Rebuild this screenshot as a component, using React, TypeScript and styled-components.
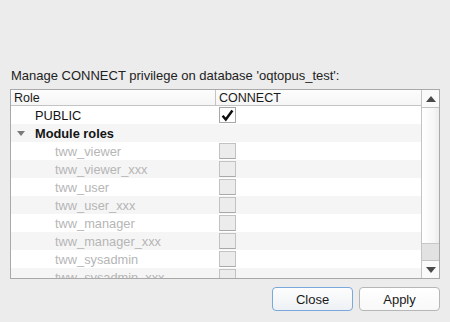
import React from 'react';
import styled, { createGlobalStyle } from 'styled-components';

const GlobalStyle = createGlobalStyle`
    html, body {
        margin: 0;
        padding: 0;
        background: #ececec;
    }
    body {
        font-family: "Liberation Sans", Arial, sans-serif;
        font-size: 13px;
        color: #1a1a1a;
    }
`;

const Dialog = styled.div`
    width: 450px;
    height: 322px;
    box-sizing: border-box;
    padding: 67px 10px 0 10px;
    display: flex;
    flex-direction: column;
`;

const Caption = styled.div`
    height: 22px;
    line-height: 17px;
    padding-left: 1px;
    font-size: 13px;
    color: #222;
`;

const Frame = styled.div`
    height: 190px;
    box-sizing: border-box;
    border: 1px solid #a9a9a9;
    display: grid;
    grid-template-columns: 1fr 18px;
    background: #fff;
    overflow: hidden;
`;

const Body = styled.div`
    display: flex;
    flex-direction: column;
    overflow: hidden;
`;

const Header = styled.div`
    display: grid;
    grid-template-columns: 205px 1fr;
    height: 15px;
    flex: none;
    border-bottom: 1px solid #c4c4c4;
    background: linear-gradient(#fdfdfd, #f5f5f5);
`;

const HeaderCell = styled.div<{ $divider?: boolean }>`
    padding-left: 3px;
    line-height: 16px;
    font-size: 12.5px;
    color: #1a1a1a;
    border-right: ${p => (p.$divider ? '1px solid #c4c4c4' : 'none')};
`;

const Row = styled.div<{ $striped?: boolean }>`
    display: grid;
    grid-template-columns: 206px 1fr;
    height: 18px;
    flex: none;
    align-items: center;
    background: ${p => (p.$striped ? '#f5f5f5' : '#ffffff')};
`;

const Name = styled.div<{ $indent: number; $muted?: boolean; $bold?: boolean }>`
    display: flex;
    align-items: center;
    padding-left: ${p => p.$indent}px;
    font-size: 12.8px;
    font-weight: ${p => (p.$bold ? 700 : 400)};
    color: ${p => (p.$muted ? '#b6b6b6' : '#141414')};
    white-space: nowrap;
`;

const Arrow = styled.span`
    width: 0;
    height: 0;
    border-left: 4px solid transparent;
    border-right: 4px solid transparent;
    border-top: 5px solid #7a7a7a;
    margin: 0 10px 0 -18px;
`;

const Check = styled.div<{ $disabled?: boolean }>`
    width: 17px;
    height: 16px;
    margin-left: 2px;
    box-sizing: border-box;
    border: 1px solid ${p => (p.$disabled ? '#c2c2c2' : '#a8a8a8')};
    border-bottom-color: ${p => (p.$disabled ? '#a9a9a9' : '#a8a8a8')};
    background: ${p => (p.$disabled ? '#ececec' : '#ffffff')};
    display: flex;
    align-items: center;
    justify-content: center;
`;

const ScrollBar = styled.div`
    border-left: 1px solid #c4c4c4;
    display: flex;
    flex-direction: column;
    background: linear-gradient(to right, #ffffff, #f6f6f6 70%, #ececec);
`;

const ScrollBtn = styled.div<{ $top?: boolean }>`
    height: 17px;
    flex: none;
    display: flex;
    align-items: center;
    justify-content: center;
    border-bottom: ${p => (p.$top ? '1px solid #c4c4c4' : 'none')};
    border-top: ${p => (p.$top ? 'none' : '1px solid #c4c4c4')};
    background: #fafafa;
`;

const Tri = styled.span<{ $up?: boolean }>`
    width: 0;
    height: 0;
    border-left: 5px solid transparent;
    border-right: 5px solid transparent;
    border-bottom: ${p => (p.$up ? '6px solid #4a4a4a' : 'none')};
    border-top: ${p => (p.$up ? 'none' : '6px solid #4a4a4a')};
`;

const Track = styled.div`
    flex: 1;
    display: flex;
    flex-direction: column;
    justify-content: flex-end;
`;

const Thumb = styled.div`
    height: 16px;
    border-top: 1px solid #c8c8c8;
    background: #e2e2e2;
`;

const Buttons = styled.div`
    display: flex;
    justify-content: flex-end;
    gap: 6px;
    padding-top: 8px;
`;

const Button = styled.button<{ $default?: boolean }>`
    width: 81px;
    height: 24px;
    font-family: "Liberation Sans", Arial, sans-serif;
    font-size: 13px;
    color: #1a1a1a;
    border-radius: 4px;
    border: 1px solid ${p => (p.$default ? '#79a9dc' : '#b6b6b6')};
    background: ${p => (p.$default ? 'linear-gradient(#fdfdfd, #eef1f5)' : 'linear-gradient(#ffffff, #f8f8f8)')};
    padding: 0;
`;

const roles = [
    'tww_viewer',
    'tww_viewer_xxx',
    'tww_user',
    'tww_user_xxx',
    'tww_manager',
    'tww_manager_xxx',
    'tww_sysadmin',
    'tww_sysadmin_xxx',
];

const CheckMark = () => (
    <svg width="13" height="13" viewBox="0 0 13 13">
        <path d="M1.6 6.8 L4.8 10.6 L11.4 1.6" fill="none" stroke="#0d0d0d" strokeWidth="2.5" strokeLinejoin="miter" />
    </svg>
);

export default function App() {
    return (
        <>
            <GlobalStyle />
            <Dialog>
                <Caption>Manage CONNECT privilege on database 'oqtopus_test':</Caption>
                <Frame>
                    <Body>
                        <Header>
                            <HeaderCell $divider>Role</HeaderCell>
                            <HeaderCell>CONNECT</HeaderCell>
                        </Header>
                        <Row>
                            <Name $indent={24}>PUBLIC</Name>
                            <Check><CheckMark /></Check>
                        </Row>
                        <Row $striped>
                            <Name $indent={24} $bold><Arrow />Module roles</Name>
                            <div />
                        </Row>
                        {roles.map((r, i) => (
                            <Row key={r} $striped={i % 2 === 1}>
                                <Name $indent={44} $muted>{r}</Name>
                                <Check $disabled />
                            </Row>
                        ))}
                    </Body>
                    <ScrollBar>
                        <ScrollBtn $top><Tri $up /></ScrollBtn>
                        <Track><Thumb /></Track>
                        <ScrollBtn><Tri /></ScrollBtn>
                    </ScrollBar>
                </Frame>
                <Buttons>
                    <Button $default>Close</Button>
                    <Button>Apply</Button>
                </Buttons>
            </Dialog>
        </>
    );
}
